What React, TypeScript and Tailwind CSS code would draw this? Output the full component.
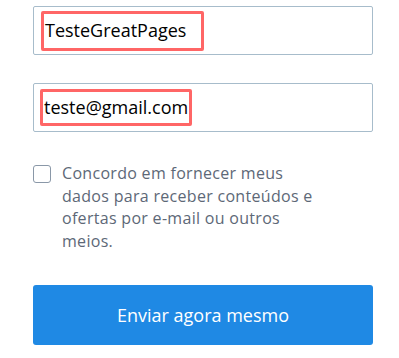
import React from "react";

export default function App() {
  return (
    <div
      className="w-[399px] h-[358px] bg-white pl-[33px] pr-[26px] pt-[6px]"
      style={{ fontFamily: '"Open Sans", "Noto Sans", sans-serif' }}
    >
      {/* Name */}
      <div className="h-[49px] border border-[#a7bccb] rounded-[2px] flex items-center pl-[7px]">
        <span className="w-[163px] h-[40px] border-[3px] border-[#ff6666] rounded-[2px] flex items-center pl-[1px] text-[18px] text-black">
          TesteGreatPages
        </span>
      </div>

      {/* Email */}
      <div className="mt-[28px] h-[49px] border border-[#a7bccb] rounded-[2px] flex items-center pl-[6px]">
        <span className="w-[152px] h-[37px] border-[3px] border-[#ff6666] rounded-[2px] flex items-center pl-[1px] text-[18px] text-black">
          teste@gmail.com
        </span>
      </div>

      {/* Consent */}
      <label className="mt-[32px] flex items-start gap-[11px]">
        <span className="mt-[1px] w-[18px] h-[18px] shrink-0 border-[1.5px] border-[#8a98a8] rounded-[3px] bg-white" />
        <span className="w-[258px] text-[16px] leading-[22.5px] tracking-[0.3px] text-[#5d6877] -mt-[2px]">
          Concordo em fornecer meus dados para receber conteúdos e ofertas por e-mail ou outros meios.
        </span>
      </label>

      {/* Submit */}
      <button className="mt-[33px] w-full h-[60px] bg-[#1f89e4] rounded-[3px] text-white text-[18px] flex items-center justify-center">
        Enviar agora mesmo
      </button>
    </div>
  );
}
